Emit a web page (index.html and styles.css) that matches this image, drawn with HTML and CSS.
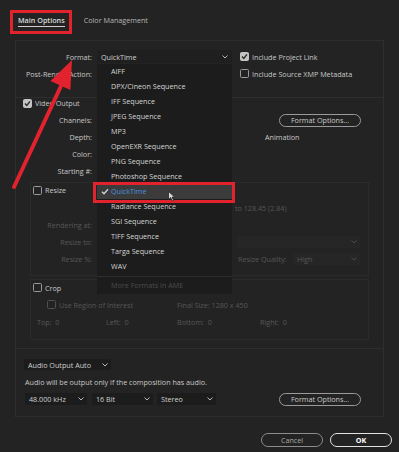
FILE: index.html
```html
<!DOCTYPE html>
<html lang="en">
<head>
    <meta charset="UTF-8">
    <title>Output Module Settings</title>
    <link rel="stylesheet" href="styles.css">
</head>
<body>
<div class="dialog">
    <!-- Tabs -->
    <div class="tabs">
        <span class="tab active">Main Options</span>
        <span class="tab">Color Management</span>
    </div>

    <div class="panel">
        <!-- Format -->
        <div class="sec-format">
            <div class="row">
                <span class="lbl">Format:</span>
                <span class="sel">QuickTime <svg class="chev" width="6" height="4" viewBox="0 0 6 4"><polyline points="0.5,0.5 3,3 5.5,0.5"/></svg></span>
                <span class="check on"><span class="box"><svg width="7" height="7" viewBox="0 0 7 7"><polyline points="1,3.6 2.8,5.4 6,1.4"/></svg></span>Include Project Link</span>
            </div>
            <div class="row">
                <span class="lbl">Post-Render Action:</span>
                <span class="sel"></span>
                <span class="check"><span class="box"></span>Include Source XMP Metadata</span>
            </div>
        </div>

        <!-- Video (values sit under the open menu) -->
        <div class="sec-video">
            <div class="vhead">
                <span class="check on"><span class="box"><svg width="7" height="7" viewBox="0 0 7 7"><polyline points="1,3.6 2.8,5.4 6,1.4"/></svg></span>Video Output</span>
            </div>
            <div class="row">
                <span class="lbl">Channels:</span><span class="val"></span>
                <span class="btn fmt">Format Options...</span>
            </div>
            <div class="row">
                <span class="lbl">Depth:</span><span class="val"></span>
                <span class="note">Animation</span>
            </div>
            <div class="row">
                <span class="lbl">Color:</span><span class="val"></span>
            </div>
            <div class="row">
                <span class="lbl">Starting #:</span><span class="val"></span>
            </div>

            <!-- Resize -->
            <div class="sub resize">
                <div class="shead"><span class="check"><span class="box"></span>Resize</span></div>
                <div class="row dim">
                    <span class="lbl"></span><span class="val"></span>
                    <span class="aspect">to 128.45 (2.84)</span>
                </div>
                <div class="row dim">
                    <span class="lbl">Rendering at:</span><span class="val"></span>
                </div>
                <div class="row dim">
                    <span class="lbl">Resize to:</span><span class="val"></span>
                    <span class="dd wide"><span></span><svg class="chev" width="6" height="4" viewBox="0 0 6 4"><polyline points="0.5,0.5 3,3 5.5,0.5"/></svg></span>
                </div>
                <div class="row dim">
                    <span class="lbl">Resize %:</span><span class="val"></span>
                    <span class="rq">Resize Quality:</span>
                    <span class="dd short"><span>High</span><svg class="chev" width="6" height="4" viewBox="0 0 6 4"><polyline points="0.5,0.5 3,3 5.5,0.5"/></svg></span>
                </div>
            </div>

            <!-- Crop -->
            <div class="sub crop">
                <div class="shead"><span class="check"><span class="box"></span>Crop</span></div>
                <div class="row dim pad">
                    <span class="cell roi"><span class="check"><span class="box"></span>Use Region of Interest</span></span>
                    <span class="cell">Final Size: 1280 x 450</span>
                </div>
                <div class="row dim pad">
                    <span class="cell c1">Top:&nbsp; 0</span>
                    <span class="cell c2">Left:&nbsp; 0</span>
                    <span class="cell c3">Bottom:&nbsp; 0</span>
                    <span class="cell">Right:&nbsp; 0</span>
                </div>
            </div>
        </div>

        <!-- Audio -->
        <div class="sec-audio">
            <span class="dd ao"><span>Audio Output Auto</span><svg class="chev" width="6" height="4" viewBox="0 0 6 4"><polyline points="0.5,0.5 3,3 5.5,0.5"/></svg></span>
            <div class="audio-note">Audio will be output only if the composition has audio.</div>
            <div class="audio-row">
                <span class="dd a1"><span>48.000 kHz</span><svg class="chev" width="6" height="4" viewBox="0 0 6 4"><polyline points="0.5,0.5 3,3 5.5,0.5"/></svg></span>
                <span class="dd a2"><span>16 Bit</span><svg class="chev" width="6" height="4" viewBox="0 0 6 4"><polyline points="0.5,0.5 3,3 5.5,0.5"/></svg></span>
                <span class="dd a3"><span>Stereo</span><svg class="chev" width="6" height="4" viewBox="0 0 6 4"><polyline points="0.5,0.5 3,3 5.5,0.5"/></svg></span>
                <span class="btn fmt2">Format Options...</span>
            </div>
        </div>
    </div>

    <!-- Buttons -->
    <div class="actions">
        <button class="cancel">Cancel</button>
        <button class="ok">OK</button>
    </div>

    <!-- Format dropdown, open -->
    <div class="menu">
        <div class="item">AIFF</div>
        <div class="item">DPX/Cineon Sequence</div>
        <div class="item">IFF Sequence</div>
        <div class="item">JPEG Sequence</div>
        <div class="item">MP3</div>
        <div class="item">OpenEXR Sequence</div>
        <div class="item">PNG Sequence</div>
        <div class="item">Photoshop Sequence</div>
        <div class="item current"><svg class="tick" width="8" height="7" viewBox="0 0 8 7"><polyline points="1,3.8 3,5.8 7,1.2"/></svg>QuickTime</div>
        <div class="item">Radiance Sequence</div>
        <div class="item">SGI Sequence</div>
        <div class="item">TIFF Sequence</div>
        <div class="item">Targa Sequence</div>
        <div class="item">WAV</div>
        <div class="sep"></div>
        <div class="item off">More Formats in AME</div>
    </div>

    <!-- Annotations -->
    <svg class="marks" width="399" height="452" viewBox="0 0 399 452">
        <rect x="11.5" y="11.5" width="59" height="21" fill="none" stroke="#e2222d" stroke-width="3"/>
        <rect x="94.5" y="183.5" width="139" height="18" fill="none" stroke="#e2222d" stroke-width="3"/>
        <line x1="14" y1="187" x2="61" y2="86" stroke="#e2222d" stroke-width="4" stroke-linecap="round"/>
        <polygon points="72,60 70.4,90.1 50.4,80.9" fill="#e2222d"/>
    </svg>

    <svg class="cursor" width="8" height="11" viewBox="0 0 8 11">
        <path d="M0.5 0.5 L0.5 8.5 L2.6 6.6 L4.2 10 L5.6 9.4 L4 6.1 L6.8 6.1 Z" fill="#d8d8d8" stroke="#222" stroke-width="0.8"/>
    </svg>
</div>
</body>
</html>
```

FILE: styles.css
```css
/* General */
body {
    margin: 0;
    background-color: #232323;
    font-family: "Open Sans", "Liberation Sans", sans-serif;
    font-size: 7.2px;
    color: #c8c8c8;
}

.dialog {
    position: relative;
    width: 399px;
    height: 452px;
    overflow: hidden;
}

svg.chev polyline {
    fill: none;
    stroke: #b8b8b8;
    stroke-width: 1;
}

/* Tabs */
.tabs {
    display: flex;
    gap: 19px;
    height: 40px;
    padding: 15px 0 0 18px;
    box-sizing: border-box;
}
.tab {
    line-height: 11px;
    color: #b6b6b6;
}
.tab.active {
    font-weight: 600;
    color: #dadada;
    border-bottom: 1px solid #cfcfcf;
    height: 11px;
}

/* Main panel */
.panel {
    margin-left: 15px;
    width: 369px;
    height: 377px;
    border: 1px solid #2e2e2e;
    box-sizing: border-box;
}

.row {
    display: flex;
    align-items: center;
    height: 17px;
    white-space: nowrap;
}
.lbl {
    flex: none;
    width: 76px;
    text-align: right;
}
.val {
    flex: none;
    width: 135px;
    margin-left: 5px;
}
.dim {
    color: #575757;
}

/* Checkboxes */
.check {
    display: flex;
    align-items: center;
    gap: 3px;
    white-space: nowrap;
}
.check .box {
    flex: none;
    width: 9px;
    height: 9px;
    border: 1px solid #9a9a9a;
    border-radius: 1.5px;
    box-sizing: border-box;
    display: flex;
    align-items: center;
    justify-content: center;
}
.check.on .box {
    background-color: #c4c4c4;
    border-color: #c4c4c4;
}
.check.on .box polyline {
    fill: none;
    stroke: #2a2a2a;
    stroke-width: 1.4;
}
.dim .check .box {
    border-color: #4e4e4e;
}

/* Format section */
.sec-format {
    height: 56px;
    padding-top: 7px;
    box-sizing: border-box;
}
.sel {
    flex: none;
    width: 135px;
    height: 13px;
    margin-left: 5px;
    padding: 0 4px;
    box-sizing: border-box;
    display: flex;
    align-items: center;
    justify-content: space-between;
    background-color: #1f1f1f;
    color: #d2d2d2;
}
.sec-format .check {
    margin-left: 8px;
}

/* Video section */
.sec-video {
    height: 252px;
    border-top: 1px solid #2e2e2e;
    border-bottom: 1px solid #2e2e2e;
    box-sizing: border-box;
}
.vhead {
    height: 10px;
    display: flex;
    align-items: center;
    padding-left: 7px;
    margin-bottom: 3.5px;
}
.btn {
    display: flex;
    align-items: center;
    justify-content: center;
    width: 82px;
    height: 13px;
    border: 1.3px solid #9a9a9a;
    border-radius: 7px;
    box-sizing: border-box;
    color: #cacaca;
}
.btn.fmt {
    margin-left: 47px;
}
.note {
    margin-left: 33px;
}

/* Sub panels */
.sub {
    margin-left: 14px;
    width: 339px;
    border: 1px solid #2b2b2b;
    box-sizing: border-box;
}
.sub .lbl {
    width: 61px;
}
.shead {
    height: 15px;
    display: flex;
    align-items: center;
    padding-left: 2px;
}
.resize {
    margin-top: 2px;
    padding-bottom: 8px;
}
.resize .shead {
    margin-bottom: 1.5px;
}
.aspect {
    margin-left: 3px;
}
.dd {
    flex: none;
    display: flex;
    align-items: center;
    justify-content: space-between;
    height: 12px;
    padding: 0 3px 0 4px;
    box-sizing: border-box;
    background-color: #1c1c1c;
}
.dim .dd {
    background-color: #262626;
}
.dim .dd svg.chev polyline {
    stroke: #4a4a4a;
}
.dd.wide {
    width: 122px;
    margin-left: 6px;
}
.rq {
    margin-left: 6px;
    width: 55px;
}
.dd.short {
    width: 67px;
}

.crop {
    margin-top: 3px;
    padding-bottom: 9px;
}
.crop .shead {
    margin-bottom: 1px;
}
.pad {
    padding-left: 6px;
}
.cell.roi {
    width: 140px;
    padding-left: 10px;
    box-sizing: border-box;
}
.cell.c1 { width: 69px; }
.cell.c2 { width: 71px; }
.cell.c3 { width: 83px; }

/* Audio section */
.sec-audio {
    padding: 10px 0 0 8px;
}
.dd.ao {
    width: 87px;
    height: 11px;
    color: #d0d0d0;
}
.audio-note {
    margin-top: 5.5px;
    height: 12px;
    line-height: 12px;
    padding-left: 1px;
    white-space: nowrap;
}
.audio-row {
    display: flex;
    align-items: center;
    margin-top: 5.5px;
    height: 12px;
    padding-left: 1px;
}
.dd.a1 { width: 62px; }
.dd.a2 { width: 61px; margin-left: 5px; }
.dd.a3 { width: 59px; margin-left: 4px; }
.audio-row .dd {
    color: #d0d0d0;
}
.btn.fmt2 {
    margin-left: 63px;
}

/* Bottom buttons */
.actions {
    display: flex;
    justify-content: flex-end;
    gap: 7px;
    margin-top: 15.5px;
    padding-right: 7px;
}
.actions button {
    width: 62px;
    height: 14px;
    padding: 0;
    background: transparent;
    border-radius: 7px;
    font-family: inherit;
    font-size: 7.2px;
    box-sizing: border-box;
}
.actions .cancel {
    border: 1.2px solid #8c8c8c;
    color: #a8a8a8;
}
.actions .ok {
    border: 1.6px solid #e2e2e2;
    color: #ffffff;
    font-weight: 700;
}

/* Open dropdown */
.menu {
    position: absolute;
    left: 97px;
    top: 64px;
    width: 135px;
    background-color: #1c1c1c;
    padding-bottom: 1px;
}
.menu .item {
    position: relative;
    height: 15px;
    line-height: 15px;
    padding-left: 14px;
    color: #d4d4d4;
    white-space: nowrap;
}
.menu .item.current {
    background-color: #3b3b3b;
    color: #4a90dc;
}
.menu .tick {
    position: absolute;
    left: 4px;
    top: 4px;
}
.menu .tick polyline {
    fill: none;
    stroke: #d6d6d6;
    stroke-width: 1.3;
}
.menu .sep {
    height: 1px;
    margin: 1.5px 0;
    background-color: #2f2f2f;
}
.menu .item.off {
    color: #4c4c4c;
}

/* Annotations */
.marks {
    position: absolute;
    left: 0;
    top: 0;
    pointer-events: none;
}
.cursor {
    position: absolute;
    left: 168px;
    top: 191px;
}
```
